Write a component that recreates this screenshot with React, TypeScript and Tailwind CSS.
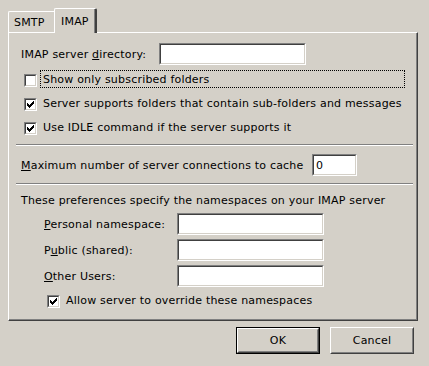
import React from "react";

const FONT = { fontFamily: '"DejaVu Sans", Tahoma, sans-serif' };

function Check() {
  return (
    <svg width="7" height="7" viewBox="0 0 7 7" shapeRendering="crispEdges" className="block">
      <path
        fill="#000"
        d="M6 0h1v1h-1z M5 1h2v1h-2z M0 2h1v1h-1z M4 2h3v1h-3z M0 3h2v1h-2z M3 3h3v1h-3z M0 4h5v1h-5z M1 5h3v1h-3z M2 6h1v1h-1z"
      />
    </svg>
  );
}

function CheckBox({ checked }: { checked: boolean }) {
  return (
    <div className="w-[13px] h-[13px] shrink-0 border border-t-[#808080] border-l-[#808080] border-b-white border-r-white">
      <div className="w-full h-full bg-white border border-t-[#404040] border-l-[#404040] border-b-[#d4d0c8] border-r-[#d4d0c8] flex items-start justify-start p-[1px]">
        {checked && <Check />}
      </div>
    </div>
  );
}

function Sunken({ w, children }: { w: string; children?: React.ReactNode }) {
  return (
    <div className={`${w} h-[22px] shrink-0 border border-t-[#808080] border-l-[#808080] border-b-white border-r-white`}>
      <div className="w-full h-full bg-white border border-t-[#404040] border-l-[#404040] border-b-[#d4d0c8] border-r-[#d4d0c8] flex items-center pl-[1px] leading-none">
        {children}
      </div>
    </div>
  );
}

function CheckRow({ checked, label, focus }: { checked: boolean; label: string; focus?: boolean }) {
  return (
    <div className="h-[24px] flex items-start">
      <div className="mt-[6px]">
        <CheckBox checked={checked} />
      </div>
      <div
        className={`ml-[3px] mt-[2px] h-[18px] flex items-center px-[2px] border whitespace-nowrap ${
          focus ? "border-dotted border-black w-[365px]" : "border-transparent"
        }`}
      >
        {label}
      </div>
    </div>
  );
}

function Sep() {
  return <div className="h-[2px] border-t border-t-[#808080] border-b border-b-white" />;
}

function Button({ label, def }: { label: string; def?: boolean }) {
  return (
    <div className={`w-[84px] h-[27px] ${def ? "border border-black" : ""}`}>
      <div className="w-full h-full border border-t-white border-l-white border-b-[#404040] border-r-[#404040]">
        <div className="w-full h-full border border-t-[#d4d0c8] border-l-[#d4d0c8] border-b-[#808080] border-r-[#808080] flex items-center justify-center">
          {label}
        </div>
      </div>
    </div>
  );
}

export default function App() {
  return (
    <div
      className="w-[429px] h-[366px] bg-[#d4d0c8] text-black text-[11px] leading-[13px] tracking-[0.2px] pt-[8px] overflow-hidden whitespace-nowrap"
      style={FONT}
    >
      {/* tabs */}
      <div className="flex items-end pl-[8px] h-[24px]">
        <div className="w-[46px] h-[21px] flex items-center pl-[5px] border-l border-t border-white rounded-tl-[2px]">
          SMTP
        </div>
        <div className="relative z-10 -mb-[1px] w-[43px] h-[25px] bg-[#d4d0c8] flex items-start pt-[6px] pl-[6px] border-l border-t border-white border-r-2 border-r-[#404040] rounded-tl-[2px] rounded-tr-[2px] shadow-[inset_-1px_0_0_#808080]">
          IMAP
        </div>
      </div>

      {/* panel */}
      <div className="ml-[8px] w-[410px] h-[289px] border border-t-white border-l-white border-b-[#404040] border-r-[#404040]">
        <div className="w-full h-full border-r border-b border-r-[#808080] border-b-[#808080] border-t-0 border-l-0 pt-[10px] pl-[7px] pr-[3px] flex flex-col">
          <div className="flex items-center h-[22px] ml-[5px]">
            <div className="w-[138px]">
              IMAP server <u>d</u>irectory:
            </div>
            <Sunken w="w-[147px]" />
          </div>

          <div className="mt-[3px] ml-[8px] flex flex-col">
            <CheckRow checked={false} label="Show only subscribed folders" focus />
            <CheckRow checked label="Server supports folders that contain sub-folders and messages" />
            <CheckRow checked label="Use IDLE command if the server supports it" />
          </div>

          <div className="mt-[4px]">
            <Sep />
          </div>

          <div className="mt-[8px] flex items-center h-[22px] ml-[5px]">
            <div className="w-[291px]">
              <u>M</u>aximum number of server connections to cache
            </div>
            <Sunken w="w-[45px]">
              <span className="pl-[1px]">0</span>
            </Sunken>
          </div>

          <div className="mt-[7px]">
            <Sep />
          </div>

          <div className="mt-[7px] h-[16px] flex items-center ml-[5px]">
            These preferences specify the namespaces on your IMAP server
          </div>

          <div className="mt-[5px] flex items-center h-[22px] ml-[28px]">
            <div className="w-[133px]">
              <u>P</u>ersonal namespace:
            </div>
            <Sunken w="w-[147px]" />
          </div>
          <div className="mt-[4px] flex items-center h-[22px] ml-[28px]">
            <div className="w-[133px]">
              P<u>u</u>blic (shared):
            </div>
            <Sunken w="w-[147px]" />
          </div>
          <div className="mt-[4px] flex items-center h-[22px] ml-[28px]">
            <div className="w-[133px]">
              <u>O</u>ther Users:
            </div>
            <Sunken w="w-[147px]" />
          </div>

          <div className="mt-[2px] ml-[31px]">
            <CheckRow checked label="Allow server to override these namespaces" />
          </div>
        </div>
      </div>

      {/* buttons */}
      <div className="mt-[6px] flex justify-end gap-[10px] pr-[15px]">
        <Button label="OK" def />
        <Button label="Cancel" />
      </div>
    </div>
  );
}
